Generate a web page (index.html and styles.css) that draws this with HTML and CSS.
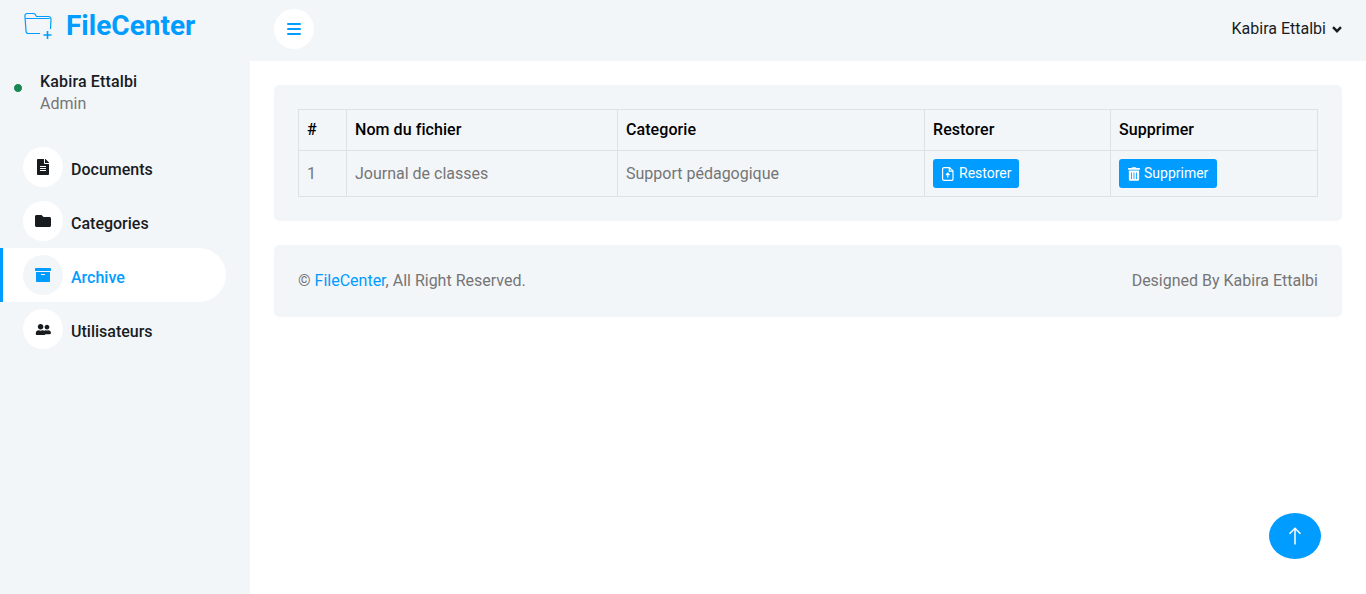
FILE: index.html
```html
<!doctype html>
<html lang="fr">
<head>
<meta charset="utf-8">
<title>FileCenter</title>
<link rel="stylesheet" href="styles.css">
</head>
<body>
	<aside class="sidebar">
		<a class="brand" href="#">
			<svg class="brand-icon" width="30" height="28" viewBox="0 0 30 28" fill="none" stroke="#009cff" stroke-width="1.2">
				<path d="M6 22.5H4.500A2.500 2.500 0 0 1 2 20L1 6V4.500A2 2 0 0 1 3 2.500H9.500A2 2 0 0 1 11 3.200L12.500 5.500H24.500A2.500 2.500 0 0 1 27 8.200L26.500 18"/>
				<path d="M1.500 7.500H25.500M4 22.500H16"/>
				<path d="M23.500 20V28M19.500 24H27.500" stroke-width="1.6"/>
			</svg>
			<span>FileCenter</span>
		</a>
		<div class="user">
			<span class="status-dot"></span>
			<div class="user-info">
				<h6>Kabira Ettalbi</h6>
				<span>Admin</span>
			</div>
		</div>
		<nav class="menu">
			<a class="menu-item" href="#">
				<span class="menu-icon">
					<svg width="12" height="16" viewBox="0 0 384 512" fill="currentColor"><path d="M224 136V0H24C10.700 0 0 10.700 0 24v464c0 13.300 10.700 24 24 24h336c13.300 0 24-10.700 24-24V160H248c-13.200 0-24-10.800-24-24zm64 236c0 6.600-5.400 12-12 12H108c-6.600 0-12-5.400-12-12v-8c0-6.600 5.400-12 12-12h168c6.600 0 12 5.400 12 12v8zm0-64c0 6.600-5.400 12-12 12H108c-6.600 0-12-5.400-12-12v-8c0-6.600 5.400-12 12-12h168c6.600 0 12 5.400 12 12v8zm0-72v8c0 6.600-5.400 12-12 12H108c-6.600 0-12-5.400-12-12v-8c0-6.600 5.400-12 12-12h168c6.600 0 12 5.400 12 12zm96-114.100v6.100H256V0h6.100c6.400 0 12.500 2.500 17 7l97.900 98c4.500 4.500 7 10.600 7 16.900z"/></svg>
				</span>
				<span class="menu-label">Documents</span>
			</a>
			<a class="menu-item" href="#">
				<span class="menu-icon">
					<svg width="16" height="16" viewBox="0 0 512 512" fill="currentColor"><path d="M464 128H272l-64-64H48C21.490 64 0 85.490 0 112v288c0 26.510 21.490 48 48 48h416c26.510 0 48-21.490 48-48V176c0-26.510-21.490-48-48-48z"/></svg>
				</span>
				<span class="menu-label">Categories</span>
			</a>
			<a class="menu-item active" href="#">
				<span class="menu-icon">
					<svg width="16" height="16" viewBox="0 0 512 512" fill="currentColor"><path d="M32 448c0 17.700 14.300 32 32 32h384c17.700 0 32-14.300 32-32V160H32v288zm160-212c0-6.600 5.400-12 12-12h104c6.600 0 12 5.400 12 12v8c0 6.600-5.400 12-12 12H204c-6.600 0-12-5.400-12-12v-8zM480 32H32C14.300 32 0 46.300 0 64v48c0 8.800 7.200 16 16 16h480c8.800 0 16-7.200 16-16V64c0-17.700-14.300-32-32-32z"/></svg>
				</span>
				<span class="menu-label">Archive</span>
			</a>
			<a class="menu-item" href="#">
				<span class="menu-icon">
					<svg width="16" height="13" viewBox="0 0 640 512" fill="currentColor"><path d="M224 256c61.900 0 112-50.100 112-112S285.900 32 224 32 112 82.100 112 144s50.100 112 112 112zm76.800 32h-8.300c-20.800 10-43.900 16-68.500 16s-47.600-6-68.500-16h-8.300C83.600 288 32 339.600 32 403.200V432c0 26.500 21.500 48 48 48h288c26.500 0 48-21.500 48-48v-28.800c0-63.600-51.600-115.200-115.200-115.200zM480 256c53 0 96-43 96-96s-43-96-96-96-96 43-96 96 43 96 96 96zm48 32h-3.800c-13.900 4.800-28.600 8-44.200 8s-30.300-3.200-44.200-8H432c-20.400 0-39.200 5.900-55.700 15.400 24.400 26.300 39.700 61.200 39.700 99.800v38.400c0 2.200-.5 4.300-.6 6.400H592c26.500 0 48-21.500 48-48 0-61.900-50.100-112-112-112z"/></svg>
				</span>
				<span class="menu-label">Utilisateurs</span>
			</a>
		</nav>
	</aside>

	<div class="main">
		<header class="topbar">
			<a class="toggle" href="#">
				<svg width="14" height="12" viewBox="0 0 14 12" fill="#009cff"><rect width="14" height="2" rx="1"/><rect y="5" width="14" height="2" rx="1"/><rect y="10" width="14" height="2" rx="1"/></svg>
			</a>
			<a class="account" href="#">
				Kabira Ettalbi
				<svg width="10" height="7" viewBox="0 0 10 7" fill="none" stroke="#191c1f" stroke-width="2.4"><path d="M1 1.200 5 5.200 9 1.200"/></svg>
			</a>
		</header>

		<div class="content">
			<section class="panel">
				<table class="files">
					<thead>
						<tr>
							<th class="col-num">#</th>
							<th class="col-name">Nom du fichier</th>
							<th class="col-cat">Categorie</th>
							<th class="col-restore">Restorer</th>
							<th>Supprimer</th>
						</tr>
					</thead>
					<tbody>
						<tr>
							<td>1</td>
							<td>Journal de classes</td>
							<td>Support pédagogique</td>
							<td>
								<a class="btn" href="#">
									<svg width="12" height="14" viewBox="0 0 12 14" fill="none" stroke="#fff" stroke-width="1.200"><path d="M2 .6H7.500L11 4V12A1.400 1.400 0 0 1 9.600 13.400H2A1.400 1.400 0 0 1 .6 12V2A1.400 1.400 0 0 1 2 .6Z"/><path d="M7.300.8V4.200H10.800M5.800 10.500V6.300M4 8 5.800 6.200 7.600 8"/></svg>
									Restorer
								</a>
							</td>
							<td>
								<a class="btn btn-delete" href="#">
									<svg width="12" height="14" viewBox="0 0 448 512" fill="#fff"><path d="M32 464a48 48 0 0 0 48 48h288a48 48 0 0 0 48-48V128H32zm272-256a16 16 0 0 1 32 0v224a16 16 0 0 1-32 0zm-96 0a16 16 0 0 1 32 0v224a16 16 0 0 1-32 0zm-96 0a16 16 0 0 1 32 0v224a16 16 0 0 1-32 0zM432 32H312l-9.400-18.700A24 24 0 0 0 281.100 0H166.800a23.700 23.700 0 0 0-21.400 13.300L136 32H16A16 16 0 0 0 0 48v32a16 16 0 0 0 16 16h416a16 16 0 0 0 16-16V48a16 16 0 0 0-16-16z"/></svg>
									Supprimer
								</a>
							</td>
						</tr>
					</tbody>
				</table>
			</section>

			<footer class="panel footer">
				<div>&copy; <a href="#">FileCenter</a>, All Right Reserved.</div>
				<div>Designed By Kabira Ettalbi</div>
			</footer>
		</div>
	</div>

	<a class="back-top" href="#">
		<svg width="14" height="18" viewBox="0 0 14 18" fill="none" stroke="#fff" stroke-width="1.500"><path d="M7 17.500V1.200M1.500 6.800 7 1.200 12.500 6.800"/></svg>
	</a>
</body>
</html>
```

FILE: styles.css
```css
html,body{
	margin: 0;
	height: 100%;
}

body {
	display: flex;
	font-family: Roboto, sans-serif;
	font-size: 16px;
	line-height: 1.5;
	color: #757575;
	background: #fff;
	overflow: hidden;
}

a {
	color: #009cff;
	text-decoration: none;
}

.sidebar {
	width: 250px;
	flex: none;
	background: #f3f6f9;
}

.brand {
	display: flex;
	align-items: center;
	gap: 12px;
	height: 50px;
	padding-left: 24px;
}

.brand-icon {
	margin-top: -1px;
}

.brand span {
	margin-top: 2px;
	font-size: 28px;
	font-weight: 700;
	line-height: 1.2;
}

.user {
	display: flex;
	align-items: center;
	height: 44px;
	margin: 21px 0 25px;
	padding-left: 13px;
}

.status-dot {
	box-sizing: border-box;
	width: 10px;
	height: 10px;
	margin-top: -10px;
	margin-right: 17px;
	border: 1px solid #fff;
	border-radius: 50%;
	background: #198754;
}

.user-info h6 {
	margin: 0;
	font-size: 16px;
	font-weight: 500;
	line-height: 1.2;
	letter-spacing: .15px;
	color: #191c1f;
}

.user-info span {
	display: block;
	margin-top: 3px;
	line-height: 20px;
}

.menu-item {
	display: flex;
	align-items: center;
	box-sizing: border-box;
	width: 226px;
	height: 54px;
	padding-left: 20px;
	border-left: 3px solid transparent;
	border-radius: 0 30px 30px 0;
	font-weight: 500;
	color: #191c1f;
}

.menu-icon {
	display: flex;
	align-items: center;
	justify-content: center;
	width: 40px;
	height: 40px;
	margin-right: 8px;
	border-radius: 50%;
	background: #fff;
}

.menu-label {
	margin-top: 6px;
}

.menu-item.active {
	color: #009cff;
	background: #fff;
	border-left-color: #009cff;
}

.menu-item.active .menu-icon {
	background: #f3f6f9;
}

.main {
	flex: 1;
}

.topbar {
	display: flex;
	align-items: center;
	justify-content: space-between;
	box-sizing: border-box;
	height: 61px;
	padding: 0 24px 3px;
	background: #f3f6f9;
}

.toggle {
	display: flex;
	align-items: center;
	justify-content: center;
	width: 40px;
	height: 40px;
	border-radius: 50%;
	background: #fff;
}

.account {
	display: flex;
	align-items: center;
	gap: 6px;
	color: #191c1f;
}

.content {
	padding: 24px;
}

.panel {
	padding: 24px;
	border-radius: 5px;
	background: #f3f6f9;
}

.files {
	width: 100%;
	border-collapse: collapse;
	table-layout: fixed;
}

.files th,
.files td {
	padding: 8px;
	border: 1px solid #dee2e6;
	text-align: left;
}

.files th {
	font-weight: 500;
	letter-spacing: .07px;
	color: #000;
}

.col-num {
	width: 31px;
}

.col-name {
	width: 254px;
}

.col-cat {
	width: 290px;
}

.col-restore {
	width: 169px;
}

.btn {
	display: inline-flex;
	align-items: center;
	gap: 5px;
	height: 29px;
	padding: 0 7px 0 9px;
	border-radius: 3px;
	vertical-align: middle;
	font-size: 14px;
	color: #fff;
	background: #009cff;
}

.btn-delete {
	gap: 4px;
	padding-right: 9px;
}

.footer {
	display: flex;
	justify-content: space-between;
	margin-top: 24px;
}

.back-top {
	position: fixed;
	right: 45px;
	bottom: 35px;
	display: flex;
	align-items: center;
	justify-content: center;
	width: 52px;
	height: 46px;
	border-radius: 50%;
	background: #009cff;
}
```
